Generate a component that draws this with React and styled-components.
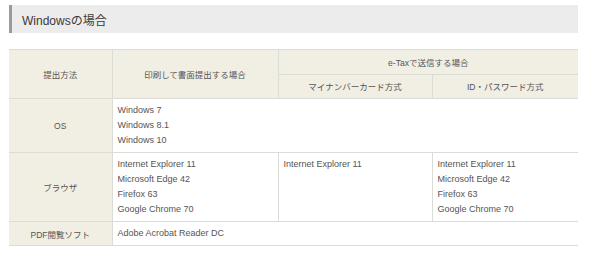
import React from "react";
import styled, { createGlobalStyle } from "styled-components";

const GlobalStyle = createGlobalStyle`
    body {
        margin: 0;
        background: #fff;
        font-family: "Liberation Sans", "Noto Sans CJK JP", sans-serif;
        color: #444;
    }
`;

const Page = styled.div`
    padding: 5px 22px 0 9px;
`;

const Heading = styled.h2`
    margin: 0;
    height: 28px;
    display: flex;
    align-items: center;
    padding-left: 10px;
    background: #ececec;
    border-left: 3px solid #9a9a9a;
    font-size: 12px;
    font-weight: normal;
    color: #3a3a3a;
`;

const Table = styled.table`
    width: 100%;
    margin-top: 16px;
    border-collapse: collapse;
    table-layout: fixed;
    border-top: 1px solid #dcdcd6;
    border-bottom: 1px solid #dcdcd6;
`;

const Th = styled.th`
    background: #f1eee4;
    color: #555;
    font-size: 8.5px;
    font-weight: normal;
    height: ${(p) => (p.$tall ? "48px" : "23px")};
    padding: 0 5px;
    text-align: center;
    vertical-align: middle;
    border: 1px solid #dcdcd6;
    &:first-child { border-left: none; }
    &:last-child { border-right: none; }
`;

const Td = styled.td`
    font-size: 9px;
    line-height: 15px;
    color: #555;
    padding: 4px 5px;
    vertical-align: top;
    border: 1px solid #dcdcd6;
    &:last-child { border-right: none; }
`;

const Line = styled.div``;

const Lines = ({ items }) => items.map((t) => <Line key={t}>{t}</Line>);

const browsers = ["Internet Explorer 11", "Microsoft Edge 42", "Firefox 63", "Google Chrome 70"];

export default function App() {
    return (
        <>
            <GlobalStyle />
            <Page>
                <Heading>Windowsの場合</Heading>
                <Table>
                    <colgroup>
                        <col style={{ width: 103 }} />
                        <col style={{ width: 166 }} />
                        <col style={{ width: 154 }} />
                        <col />
                    </colgroup>
                    <thead>
                        <tr>
                            <Th rowSpan={2} $tall>提出方法</Th>
                            <Th rowSpan={2} $tall>印刷して書面提出する場合</Th>
                            <Th colSpan={2}>e-Taxで送信する場合</Th>
                        </tr>
                        <tr>
                            <Th>マイナンバーカード方式</Th>
                            <Th>ID・パスワード方式</Th>
                        </tr>
                    </thead>
                    <tbody>
                        <tr>
                            <Th as="td">OS</Th>
                            <Td colSpan={3}>
                                <Lines items={["Windows 7", "Windows 8.1", "Windows 10"]} />
                            </Td>
                        </tr>
                        <tr>
                            <Th as="td">ブラウザ</Th>
                            <Td><Lines items={browsers} /></Td>
                            <Td>Internet Explorer 11</Td>
                            <Td><Lines items={browsers} /></Td>
                        </tr>
                        <tr>
                            <Th as="td">PDF閲覧ソフト</Th>
                            <Td colSpan={3}>Adobe Acrobat Reader DC</Td>
                        </tr>
                    </tbody>
                </Table>
            </Page>
        </>
    );
}
